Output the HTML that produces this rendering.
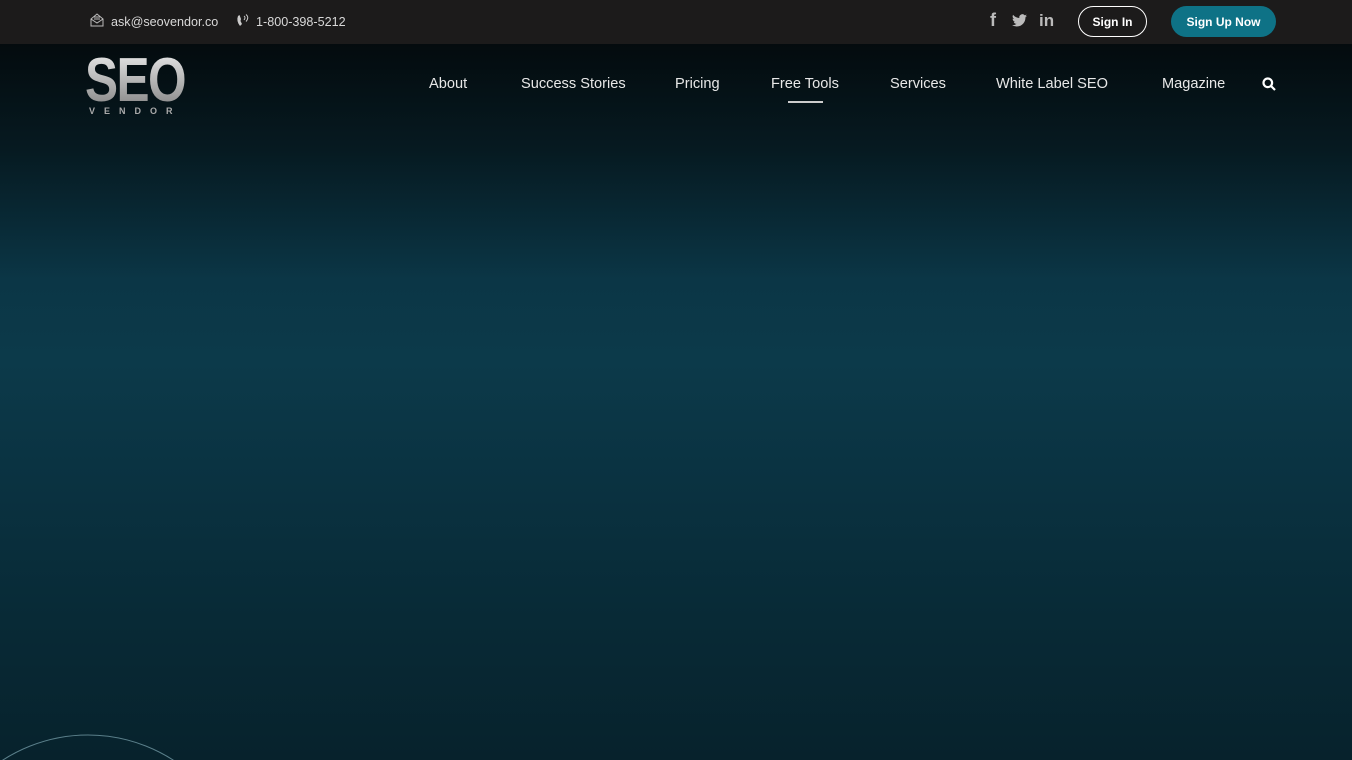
<!DOCTYPE html>
<html style="width:1352px;height:760px;overflow:hidden"><head><style>
*{margin:0;padding:0;box-sizing:border-box}
body{width:1352px;height:760px;overflow:hidden;font-family:"Liberation Sans",sans-serif;background:linear-gradient(180deg,#040b0e 44px,#061a21 150px,#0b3646 280px,#0c3a4a 360px,#0a3241 480px,#082a36 620px,#07222c 760px);position:relative}
.top{position:absolute;left:0;top:0;width:1352px;height:44px;background:#1c1b1b;color:#d8d8d8;font-size:12.6px}
.top span{position:absolute;top:15px}
.btn{position:absolute;top:6px;height:31px;border-radius:16px;font-size:12px;font-weight:bold;color:#fff;display:flex;align-items:center;justify-content:center}
.nav{position:absolute;top:76px;font-size:14.6px;color:#e8e8e8}
.logo{position:absolute;left:85px;top:56px;font-family:"Liberation Sans",sans-serif;font-weight:bold;color:#b8b8b8;overflow:visible}
</style></head><body>
<div class="top">
<svg style="position:absolute;left:90px;top:13px" width="14" height="14" viewBox="0 0 14 14" fill="none" stroke="#bbb" stroke-width="1"><path d="M1 6 L7 1 L13 6 V13 H1 Z M1 6 L7 10 L13 6"/><path d="M4 4h6M4 6h6"/></svg>
<span style="left:111px">ask@seovendor.co</span>
<svg style="position:absolute;left:236px;top:13px" width="14" height="15" viewBox="0 0 14 15" fill="#ccc"><path d="M2 3 Q0 8 4 13 L6 11 L4.5 8 L5 6 L3.5 2 Z"/><path d="M8 3q2 1.5 0 4M10 1.5q3.5 3-0 7" stroke="#ccc" fill="none"/></svg>
<span style="left:256px">1-800-398-5212</span>
<span style="left:990px;top:10px;font-weight:bold;font-size:18px;color:#bbb">f</span>
<svg style="position:absolute;left:1012px;top:14px" width="15" height="13" viewBox="0 0 24 20" fill="#bbb"><path d="M24 2.4a10 10 0 0 1-2.8.8A5 5 0 0 0 23.3.4a10 10 0 0 1-3.1 1.2A4.9 4.9 0 0 0 11.8 6 14 14 0 0 1 1.7.9a4.9 4.9 0 0 0 1.5 6.6A4.9 4.9 0 0 1 1 6.9a4.9 4.9 0 0 0 3.9 4.9 5 5 0 0 1-2.2.1 4.9 4.9 0 0 0 4.6 3.4A9.9 9.9 0 0 1 0 17.3 14 14 0 0 0 7.5 19.5c9.1 0 14-7.5 14-14v-.6A10 10 0 0 0 24 2.4z"/></svg>
<span style="left:1039px;top:11px;font-weight:bold;font-size:17px;color:#bbb">in</span>
<div class="btn" style="left:1078px;width:69px;border:1.5px solid #fff">Sign In</div>
<div class="btn" style="left:1171px;width:105px;background:#0e7286">Sign Up Now</div>
</div>
<div class="logo"><div style="font-size:62px;line-height:50px;letter-spacing:-2px;transform:scaleX(0.8);transform-origin:left;background:linear-gradient(#e0e0e0,#8a8a8a);-webkit-background-clip:text;background-clip:text;color:transparent;white-space:nowrap">SEO</div><div style="font-size:9px;letter-spacing:9px;margin-left:4px;margin-top:0px;color:#aaa">VENDOR</div></div>
<div class="nav" style="left:429px">About</div>
<div class="nav" style="left:521px">Success Stories</div>
<div class="nav" style="left:675px">Pricing</div>
<div class="nav" style="left:771px">Free Tools</div>
<div style="position:absolute;left:788px;top:101px;width:35px;height:2px;background:#ccc"></div>
<div class="nav" style="left:890px">Services</div>
<div class="nav" style="left:996px">White Label SEO</div>
<div class="nav" style="left:1162px">Magazine</div>
<svg style="position:absolute;left:1262px;top:77px" width="14" height="14" viewBox="0 0 14 14" fill="none" stroke="#fff" stroke-width="2.2"><circle cx="5.8" cy="5.8" r="4.3"/><path d="M9 9l4 4"/></svg>
<svg style="position:absolute;left:0;top:730px" width="200" height="30"><circle cx="88" cy="162" r="157" fill="none" stroke="#5a7f8a" stroke-width="1"/></svg>
</body></html>
